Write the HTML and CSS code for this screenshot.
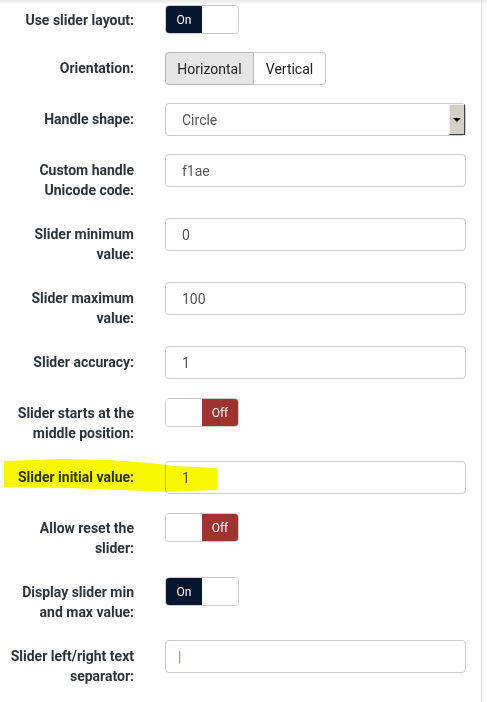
FILE: index.html
```html
<!DOCTYPE html>
<html>
<head>
<meta charset="utf-8">
<link rel="stylesheet" href="styles.css">
</head>
<body>
<div class="panel">
  <form class="form">
    <div class="row">
      <label class="label">Use slider layout:</label>
      <div class="toggle on"><span class="knob-on">On</span><span class="blank"></span></div>
    </div>
    <div class="row">
      <label class="label">Orientation:</label>
      <div class="btn-group"><span class="btn active">Horizontal</span><span class="btn">Vertical</span></div>
    </div>
    <div class="row">
      <label class="label">Handle shape:</label>
      <div class="select"><span class="select-text">Circle</span><span class="select-arrow"></span></div>
    </div>
    <div class="row">
      <label class="label">Custom handle Unicode code:</label>
      <div class="input">f1ae</div>
    </div>
    <div class="row">
      <label class="label">Slider minimum value:</label>
      <div class="input">0</div>
    </div>
    <div class="row">
      <label class="label">Slider maximum value:</label>
      <div class="input">100</div>
    </div>
    <div class="row">
      <label class="label">Slider accuracy:</label>
      <div class="input">1</div>
    </div>
    <div class="row">
      <label class="label">Slider starts at the middle position:</label>
      <div class="toggle off"><span class="blank"></span><span class="knob-off">Off</span></div>
    </div>
    <div class="row highlighted">
      <svg class="marker" width="230" height="40" viewBox="0 0 230 40"><polygon points="4,4 60,2 110,3 150,6 175,9 217,11 217,33 170,35 120,33 70,31 4,30" /></svg>
      <label class="label">Slider initial value:</label>
      <div class="input">1</div>
    </div>
    <div class="row">
      <label class="label">Allow reset the slider:</label>
      <div class="toggle off"><span class="blank"></span><span class="knob-off">Off</span></div>
    </div>
    <div class="row">
      <label class="label">Display slider min and max value:</label>
      <div class="toggle on"><span class="knob-on">On</span><span class="blank"></span></div>
    </div>
    <div class="row">
      <label class="label">Slider left/right text separator:</label>
      <div class="input sep">|</div>
    </div>
  </form>
</div>
</body>
</html>
```
FILE: styles.css
```css
html, body {
  margin: 0;
  padding: 0;
  background: #fff;
}
body {
  font-family: Roboto, "Liberation Sans", sans-serif;
  color: #333;
  background: linear-gradient(#e9e9e9, #fff 5px) no-repeat;
  min-height: 702px;
}
.panel {
  width: 481px;
  min-height: 702px;
  border-right: 1px solid #dcdcdc;
  box-sizing: content-box;
}
.form {
  padding-top: 4px;
}
.row {
  display: grid;
  grid-template-columns: 126px 301px;
  column-gap: 31px;
  padding-left: 8px;
  margin-bottom: 18px;
  align-items: start;
  position: relative;
}
.label {
  text-align: right;
  font-weight: 700;
  font-size: 14px;
  line-height: 20px;
  padding-top: 6px;
  color: #2e333b;
  position: relative;
}
.toggle {
  width: 72px;
  height: 27px;
  border: 1px solid #ccc;
  border-radius: 4px;
  display: flex;
  overflow: hidden;
  margin-top: 1px;
  font-size: 12px;
  color: #fff;
}
.toggle span {
  flex: 0 0 36px;
  display: flex;
  align-items: center;
  justify-content: center;
}
.knob-on {
  background: #071630;
}
.knob-off {
  background: #a0332f;
}
.blank {
  background: #fff;
}
.btn-group {
  display: flex;
  width: 161px;
  height: 33px;
}
.btn {
  display: flex;
  align-items: center;
  justify-content: center;
  border: 1px solid #ccc;
  font-size: 14px;
  color: #222;
  box-sizing: border-box;
}
.btn:first-child {
  width: 89px;
  border-radius: 4px 0 0 4px;
  background: #e6e6e6;
  border-color: #b8b8b8;
}
.btn:last-child {
  width: 72px;
  border-left: none;
  border-radius: 0 4px 4px 0;
  background: #fff;
}
.input, .select {
  height: 33px;
  box-sizing: border-box;
  border: 1px solid #ccc;
  border-radius: 4px;
  font-size: 14px;
  color: #555;
  padding-left: 16px;
  display: flex;
  align-items: center;
  background: #fff;
}
.select {
  position: relative;
}
.select-text {
  color: #555;
}
.select-arrow {
  position: absolute;
  right: 0;
  top: 0;
  width: 16px;
  height: 31px;
  box-sizing: border-box;
  background: #d4d0c8;
  border-top: 1px solid #f0f0f0;
  border-left: 1px solid #f0f0f0;
  border-right: 1px solid #404040;
  border-bottom: 1px solid #404040;
}
.select-arrow::after {
  content: "";
  position: absolute;
  left: 3px;
  top: 13px;
  border-left: 4px solid transparent;
  border-right: 4px solid transparent;
  border-top: 4px solid #000;
}
.sep {
  color: #b87a4a;
  padding-left: 12px;
}
.highlighted .input {
  position: relative;
}
.marker {
  position: absolute;
  left: 0;
  top: -4px;
  z-index: 2;
  mix-blend-mode: multiply;
  pointer-events: none;
}
.marker polygon {
  fill: #f8f800;
}
```
